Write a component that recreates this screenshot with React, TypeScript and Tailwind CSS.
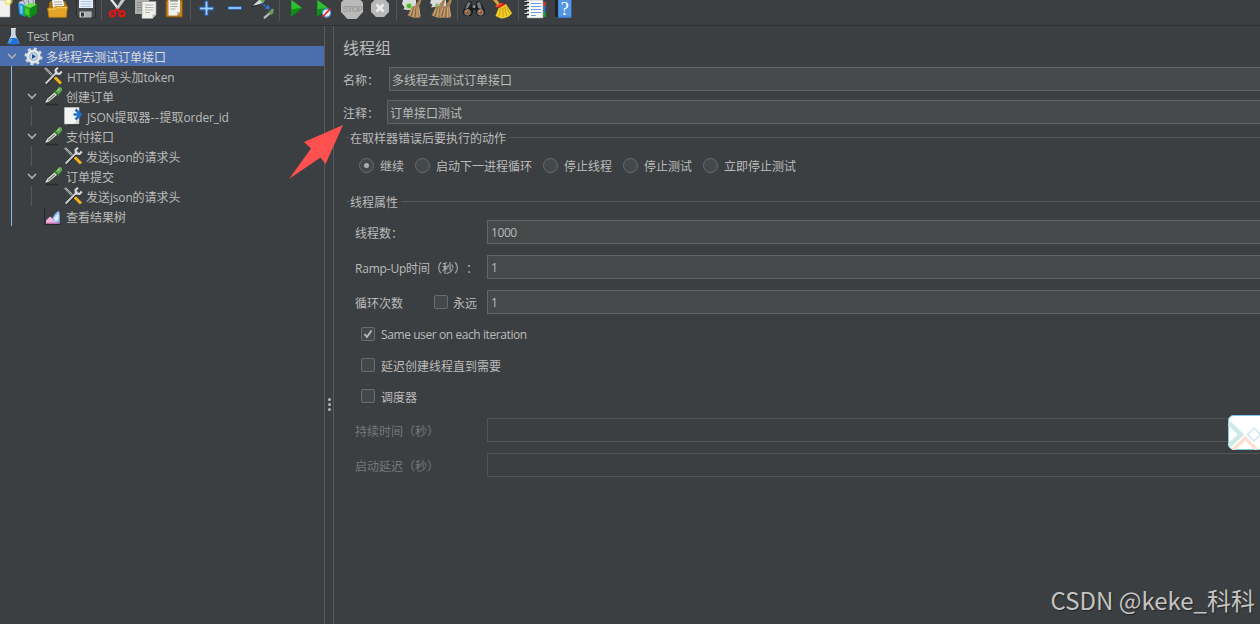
import React from 'react'

interface TreeItem {
  label: string
  icon: React.ReactNode
  depth: number
  open?: boolean
  selected?: boolean
  guide?: boolean
}

const FONT = "font-['Open_Sans','Noto_Sans_CJK_SC',sans-serif]"

const isLatin = (text: string) => /^[\x20-\x7e]+$/.test(text)

// Latin runs are set a little tighter than the CJK ones
const Txt = ({ children }: { children: string }) => (
  <>
    {children.split(/(--|[\x20-\x7e]+)/).map((part, i) => {
      if (i % 2 === 0) return part
      const spacing = part === '--' ? 'tracking-[0.7px]' : isLatin(children) ? 'tracking-[-0.41px]' : 'tracking-[-0.2px]'
      return (
        <span key={i} className={`[font-variant-ligatures:none] ${spacing}`}>{part}</span>
      )
    })}
  </>
)

/* ---------- toolbar icons ---------- */

const Ico = ({ children }: { children: React.ReactNode }) => (
  <div className="flex flex-1 justify-center">
    <svg width="28" height="25" viewBox="0 0 28 25" className="shrink-0">{children}</svg>
  </div>
)

const NewIcon = () => (
  <Ico>
    <path d="M8 0h16v17H8z" fill="#f1f1ef" stroke="#aaa" strokeWidth=".6" />
    <circle cx="22.5" cy="1" r="4.2" fill="#f4df45" opacity=".65" />
    <circle cx="22.5" cy="1" r="2.2" fill="#fffbd0" />
  </Ico>
)

const TemplatesIcon = () => (
  <Ico>
    <path d="M4 2l5-2h11v6H4z" fill="#c4ccd2" />
    <path d="M8 0l2 4M13 0l1 4M18 0l1 4" stroke="#7d8b95" strokeWidth="1" />
    <path d="M3 3l7 2v12l-6-3z" fill="#1793dc" />
    <path d="M4.500 5l3 1v8l-2-1z" fill="#6fc6f5" />
    <path d="M8.500 6l7 2v10l-7-3z" fill="#1fae25" />
    <path d="M15.500 8l6.500-4v9l-6.500 5z" fill="#0e8a12" />
    <path d="M8.500 6l7-3 6.500 1-6.500 4z" fill="#6de04e" />
    <path d="M10 8l4 1.300v6l-4-1.600z" fill="#45cc34" />
  </Ico>
)

const OpenIcon = () => (
  <Ico>
    <path d="M5 3l2-2h14l2 4v12H5z" fill="#a8700f" />
    <path d="M8 0h11l2 8H9z" fill="#f2f2ee" />
    <path d="M10 2h8M10.500 4.500h8" stroke="#aaa" strokeWidth="1" />
    <path d="M3.500 8h6l2-1.500h12L22 17.300H5z" fill="#e3a527" stroke="#b97d14" strokeWidth=".8" />
    <path d="M5 9.200h6l2-1.500h10" stroke="#f8d067" fill="none" />
  </Ico>
)

const SaveIcon = () => (
  <Ico>
    <path d="M3.500 0h19v17.500h-17l-2-2z" fill="#45484d" stroke="#25272a" strokeWidth=".8" />
    <path d="M6 0h14v8H6z" fill="#e9f0f8" />
    <path d="M7.500 1.500h11M7.500 4h11M7.500 6.500h11" stroke="#a9c3e4" strokeWidth="1" />
    <path d="M6.500 11.500h12v6h-12z" fill="#c9cacc" />
    <path d="M8 12.500h3v4H8z" fill="#36383b" />
    <path d="M12 12h6v5h-6z" fill="#8f9194" opacity=".5" />
  </Ico>
)

const CutIcon = () => (
  <Ico>
    <path d="M7 0l7 9 1.500-2L10 0z" fill="#e5e5e5" />
    <path d="M22 0l-8 11-1.500-2L18 0z" fill="#c7c7c7" />
    <circle cx="9.500" cy="13.800" r="2.600" fill="none" stroke="#dc1515" strokeWidth="2.300" />
    <circle cx="18.900" cy="13.800" r="2.600" fill="none" stroke="#dc1515" strokeWidth="2.300" />
    <path d="M11 11.500l3-2 3 2" stroke="#dc1515" strokeWidth="2" fill="none" />
  </Ico>
)

const CopyIcon = () => (
  <Ico>
    <path d="M3 0h14v14H3z" fill="#adadaa" />
    <path d="M5 2.500h8M5 5h5M5 7.500h5M5 10h5" stroke="#8b8b89" strokeWidth="1" />
    <path d="M10 1.500H24v13L20.500 18.500H10z" fill="#f0f0ed" stroke="#999" strokeWidth=".7" />
    <path d="M13 5h8.500M13 7.500h8.500M13 10h8.500M13 12.500h5" stroke="#b3b3b1" strokeWidth="1" />
    <path d="M24 14.500h-3.500V18z" fill="#bcbcb8" />
  </Ico>
)

const PasteIcon = () => (
  <Ico>
    <path d="M5 0h16.500v17H5z" fill="#c08226" stroke="#80500d" strokeWidth="1" />
    <path d="M7.500 0h11.500v12l-3 3.500H7.500z" fill="#f2f2ec" />
    <path d="M9.500 4h7M9.500 6.500h7M9.500 9h5" stroke="#a9a9a5" strokeWidth="1" />
    <path d="M9 0h8v1.500H9z" fill="#8d8d89" />
    <path d="M19 12h-3v3.500z" fill="#b5b5ae" />
  </Ico>
)

const PlusIcon = () => (
  <Ico>
    <path d="M12 1h3v6h5.500v3H15v5.500h-3V10H6.500V7H12z" fill="#7fb6f3" stroke="#2b5fae" strokeWidth="1" />
    <path d="M13.500 2v12.500M7.500 8.500h12" stroke="#a9d0fa" strokeWidth="1" />
  </Ico>
)

const MinusIcon = () => (
  <Ico>
    <path d="M7 6.500h13.500v3H7z" fill="#8cc0f6" stroke="#2b5fae" strokeWidth="1" />
  </Ico>
)

const ToggleIcon = () => (
  <Ico>
    <path d="M4 5.500l6-5.500h5l-2 3-6.500 2.500z" fill="#d5d8d5" />
    <path d="M11 0h5l-2 3.500z" fill="#6aaa55" />
    <path d="M3 7l6-2" stroke="#202324" />
    <path d="M12 3l6 4" stroke="#3273dc" strokeWidth="1.500" strokeDasharray="2 1" />
    <path d="M20.500 9.500l-.5-5-4.500 4z" fill="#3273dc" />
    <path d="M15 19l-.5-2 6-5 1.500 1.500-5 4.500z" fill="#b7bcb6" />
    <path d="M19.500 12.500l3.500-4 2 1-1 4-2 1.500z" fill="#6f9a62" />
  </Ico>
)

const PlayIcon = () => (
  <Ico>
    <path d="M9 0l11.500 8L9 17z" fill="#0c8f14" />
    <path d="M9.500 0l10 7.500-10 2z" fill="#31bd35" />
  </Ico>
)

const PlayNoTimersIcon = () => (
  <Ico>
    <path d="M7 0l11.500 8L7 17z" fill="#0c8f14" />
    <path d="M7.500 0l10 7.500-10 2z" fill="#31bd35" />
    <circle cx="16.500" cy="13" r="4.200" fill="#e3edf5" stroke="#4f8fce" strokeWidth="1.200" />
    <path d="M12.500 17L20.500 8.500" stroke="#df2020" strokeWidth="1.600" />
  </Ico>
)

const StopIcon = () => (
  <Ico>
    <path d="M8.500-3h11L25 2.500v9.500l-6.500 7h-9L3 12V2.500z" fill="#b9b9b9" />
    <text x="4.500" y="11.500" fontSize="9" fontWeight="700" letterSpacing="-1.200" fill="#9c9c9c" fontFamily="Liberation Sans">STOP</text>
  </Ico>
)

const ShutdownIcon = () => (
  <Ico>
    <path d="M9.500-1h9L23 3.500v8.500l-5 5h-8l-5-5V3.500z" fill="#b9b9b9" />
    <path d="M10.500 4.500l7 7M17.500 4.500l-7 7" stroke="#ededed" strokeWidth="2.600" />
  </Ico>
)

const Bristle = ({ x = 0 }: { x?: number }) => (
  <g transform={`translate(${x} 0)`}>
    <path d="M15 5l4-5h2.500L19 7z" fill="#a78253" />
    <path d="M12 6.500l7-1.500 1.500 12.500-6 .5-7-2.500z" fill="#a9845a" />
    <path d="M12.500 8l-3 7.500M14.500 8l-1.500 9M17 8l0 9.500M18.500 7l1.500 9" stroke="#d0ad7e" strokeWidth=".9" />
    <path d="M13.500 8l-2.300 8M16 8l-1 9.500" stroke="#74522c" strokeWidth=".6" />
  </g>
)

const ClearIcon = () => (
  <Ico>
    <path d="M4 0h13v6l-4 4H8L6 9.500H4.500L5.500 7 3 4z" fill="#d9dbdc" />
    <circle cx="10" cy="6" r="3.200" fill="#a9dd90" />
    <circle cx="10" cy="6" r="2.200" fill="#4bb527" />
    <Bristle x={1} />
  </Ico>
)

const ClearAllIcon = () => (
  <Ico>
    <path d="M4 0h15v7H7L4 7.500l1.500-2.500L3 3z" fill="#d9dbdc" />
    <circle cx="10" cy="5.500" r="2.200" fill="#8cc873" />
    <Bristle x={-3} />
    <Bristle x={3.5} />
  </Ico>
)

const SearchIcon = () => (
  <Ico>
    <path d="M8 1l4 1v3h4V2l4-1 5 9v4l-3 2h-4l-2-3v-3h-3v3l-2 3H6l-3-2v-4z" fill="#1d1e1f" />
    <path d="M8 2l3 1-3 5-3 1zM20 2l-3 1 1 5 4 1z" fill="#777b7e" />
    <circle cx="7.500" cy="12.300" r="2.800" fill="#9a5b30" stroke="#8a8c8e" />
    <circle cx="20.500" cy="12.300" r="2.800" fill="#9a5b30" stroke="#8a8c8e" />
    <path d="M6 12l1.500-1.500M19 12l1.500-1.500" stroke="#f0b780" />
    <circle cx="14" cy="6.500" r="1.500" fill="#909396" />
  </Ico>
)

const BroomIcon = () => (
  <Ico>
    <path d="M5 0h4l3 4-2 2z" fill="#d9a636" />
    <path d="M11 7l7-3 6 9c-1.500 3-5.500 5-11 5.500L7.500 16z" fill="#f0cd28" />
    <path d="M13 8l-2 8.500M15 8l0 9M16.500 6.500l2 9.500M18 6l4 7.500" stroke="#b98d0c" strokeWidth=".7" />
    <path d="M6.500 6.500l7-4 4 2-6 3.500z" fill="#df2514" />
    <path d="M8 6.500l5.500-3" stroke="#ff7665" />
  </Ico>
)

const FunctionIcon = () => (
  <Ico>
    <path d="M20 2h5v5h-5z" fill="#c43a30" />
    <path d="M20 6h4.500v6H20z" fill="#2a73d2" />
    <path d="M20 12h5v5h-5z" fill="#1e9a2a" />
    <path d="M6 0h16v18H6z" fill="#fafafa" stroke="#989898" strokeWidth=".6" />
    <path d="M10 3.500h10M10 6.500h10M10 9.500h10M10 12.500h10M10 15.500h5" stroke="#6f9cdd" strokeWidth="1.200" />
    <path d="M4 2.500h4M4 6.500h4M4 10.500h4M4 14.500h4" stroke="#191919" strokeWidth="1.500" />
    <path d="M3.500 1.500h3M3.500 5.500h3M3.500 9.500h3M3.500 13.500h3" stroke="#ddd" strokeWidth="1" />
  </Ico>
)

const HelpIcon = () => (
  <Ico>
    <path d="M6 0h16.500v18H8l-2-1.500z" fill="#3a7fd4" />
    <path d="M6 0h3v18l-3-1.500z" fill="#1d222b" />
    <path d="M9.500 0h12.500v16.500H9.500z" fill="#5496e2" />
    <text x="15.700" y="14.500" textAnchor="middle" fontSize="18" fill="#fff" fontFamily="Liberation Serif">?</text>
  </Ico>
)

const Sep = () => <div className="h-[21px] w-px bg-[#555555]" />

const Toolbar = () => (
  <div className="flex h-[26px] shrink-0 overflow-hidden border-b border-[#323232]">
    <div className="-ml-[15px] flex w-[116px] shrink-0">
      <NewIcon /><TemplatesIcon /><OpenIcon /><SaveIcon />
    </div>
    <Sep />
    <div className="flex w-[88px]"><CutIcon /><CopyIcon /><PasteIcon /></div>
    <Sep />
    <div className="flex w-[88px] px-0.5"><PlusIcon /><MinusIcon /><ToggleIcon /></div>
    <Sep />
    <div className="flex w-[116px] px-0.5"><PlayIcon /><PlayNoTimersIcon /><StopIcon /><ShutdownIcon /></div>
    <Sep />
    <div className="flex w-[60px] px-0.5"><ClearIcon /><ClearAllIcon /></div>
    <Sep />
    <div className="flex w-[60px] px-0.5"><SearchIcon /><BroomIcon /></div>
    <Sep />
    <div className="flex w-[60px] px-0.5"><FunctionIcon /><HelpIcon /></div>
  </div>
)

/* ---------- tree ---------- */

const TreeIcon = ({ children }: { children: React.ReactNode }) => (
  <svg width="20" height="20" viewBox="0 0 20 20" className="shrink-0">{children}</svg>
)

const Flask = () => (
  <TreeIcon>
    <path d="M8 2.500h5M8.700 3v6L5 17.500h11L12 9V3z" fill="#c3d2e0" stroke="#dce3ea" strokeWidth="1" />
    <path d="M7.500 12h6l2.800 5.500c0 1.500-12 1.500-12 0z" fill="#1c72d8" />
    <path d="M8.500 13l-2 4" stroke="#8fc3f8" />
  </TreeIcon>
)

const Gear = () => (
  <TreeIcon>
    <circle cx="10.500" cy="10.500" r="7.800" fill="none" stroke="#d5d8da" strokeWidth="2.400" strokeDasharray="3.060 3.060" />
    <circle cx="10.500" cy="10.500" r="5.800" fill="#c3d8ef" stroke="#e4e6e8" strokeWidth="2.600" />
    <circle cx="10.500" cy="10.500" r="4" fill="#c3daf2" stroke="#8ea3b8" strokeWidth=".8" />
    <path d="M9 8l4 2.500-4 2.500z" fill="#24508c" />
  </TreeIcon>
)

const Tools = () => (
  <TreeIcon>
    <path d="M2 2L11 11" stroke="#c6c8c8" strokeWidth="2.200" />
    <path d="M2 2.500L11 11" stroke="#333" strokeWidth=".7" />
    <path d="M11 10.500l7 7" stroke="#f2b414" strokeWidth="3" />
    <path d="M3 17.500L14 6.500" stroke="#16181a" strokeWidth="3.600" />
    <path d="M2.700 17.500L14.500 5.500" stroke="#c9cdcd" strokeWidth="2.200" />
    <path d="M15 1.800l-2.500 2.200.5 3.500 3.500.5 2.300-2.500" fill="none" stroke="#d9dddd" strokeWidth="2" />
  </TreeIcon>
)

const Dropper = () => (
  <TreeIcon>
    <path d="M3 18.500h12" stroke="#1e2021" strokeWidth="1.600" opacity=".7" />
    <path d="M1.500 17.500l2-4.500L12 5.500l3 3-9 7.500z" fill="#dfe4df" stroke="#222" strokeWidth=".7" />
    <path d="M5 14.500l7-6" stroke="#6f8570" strokeWidth="1.200" />
    <path d="M11 4.500l5 5" stroke="#2c6a2b" strokeWidth="2" />
    <path d="M12.500 5.500l3-4c1.500-1.500 4.500.5 3.500 3L15.500 8.500z" fill="#5faa50" />
    <path d="M14.500 5l2-2.500" stroke="#b3e2a5" />
  </TreeIcon>
)

const Extractor = () => (
  <TreeIcon>
    <path d="M5 18.500h12" stroke="#1e2021" strokeWidth="1.400" />
    <path d="M1.500 1.500h14.500V18H1.500z" fill="#f4f4f2" stroke="#c4c4c2" strokeWidth=".6" />
    <path d="M11 18h5v-5z" fill="#d0d0cd" />
    <path d="M12.500 3.500l5 5-5 5M10.500 8.500h6" fill="none" stroke="#2070d0" strokeWidth="2.600" />
  </TreeIcon>
)

const Results = () => (
  <TreeIcon>
    <path d="M1.500 2v16.500h16" stroke="#25282a" strokeWidth="1" fill="none" />
    <path d="M3 17.500v-3l4-4 4 3 3 4z" fill="#f2b4dc" />
    <path d="M9.500 12c2-4 4-6.500 6.500-7 1 3 1 8 .5 12.500H12z" fill="#8dbcee" />
    <path d="M11 12l4.500-5v6l-3 3z" fill="#dceeff" />
    <path d="M3 17h13" stroke="#e06ab8" />
  </TreeIcon>
)

const items: TreeItem[] = [
  { label: 'Test Plan', icon: <Flask />, depth: 0 },
  { label: '多线程去测试订单接口', icon: <Gear />, depth: 1, open: true, selected: true },
  { label: 'HTTP信息头加token', icon: <Tools />, depth: 2 },
  { label: '创建订单', icon: <Dropper />, depth: 2, open: true },
  { label: 'JSON提取器--提取order_id', icon: <Extractor />, depth: 3, guide: true },
  { label: '支付接口', icon: <Dropper />, depth: 2, open: true },
  { label: '发送json的请求头', icon: <Tools />, depth: 3, guide: true },
  { label: '订单提交', icon: <Dropper />, depth: 2, open: true },
  { label: '发送json的请求头', icon: <Tools />, depth: 3, guide: true },
  { label: '查看结果树', icon: <Results />, depth: 2 },
]

const indents = ['w-[3px]', 'w-[3px]', 'w-[23px]', 'w-[43px]']

const Row = ({ item }: { item: TreeItem }) => (
  <div className={`flex h-5 items-center whitespace-nowrap ${item.selected ? 'bg-[#4b6eaf]' : ''}`}>
    {/* guide lines */}
    <div className={`flex h-5 shrink-0 ${indents[item.depth]}`}>
      {item.depth > 1 && <div className="ml-[11px] h-5 w-px bg-[#7fbdea]" />}
      {item.guide && <div className="ml-[19px] h-5 w-px bg-[#54585a]" />}
    </div>
    {item.depth > 0 && (
      <div className="flex w-5 shrink-0 justify-center pr-0.5">
        {item.open && (
          <svg width="10" height="8" viewBox="0 0 10 8">
            <path d="M1 2l4 4 4-4" fill="none" stroke="#adadad" strokeWidth="1.700" />
          </svg>
        )}
      </div>
    )}
    {item.icon}
    <span className={`${isLatin(item.label) ? 'pt-0.5' : 'pt-1'} ${/^[A-Z]/.test(item.label) ? 'ml-1' : 'ml-[3px]'} ${item.selected ? 'text-[#dddddd]' : ''}`}>
      <Txt>{item.label}</Txt>
    </span>
  </div>
)

/* ---------- form ---------- */

const Field = ({ value = '', disabled }: { value?: string; disabled?: boolean }) => (
  <div className={`flex h-6 flex-1 items-center border border-r-0 ${isLatin(value) ? 'pl-[3px]' : 'pl-0.5'} ${disabled ? 'border-[#515355]' : 'border-[#646464] bg-[#45494a]'}`}>
    <span className={isLatin(value) ? 'pt-px' : 'pt-[3px]'}><Txt>{value}</Txt></span>
  </div>
)

const Check = ({ checked }: { checked?: boolean }) => (
  <div className="h-3.5 w-3.5 shrink-0 rounded-[2px] border border-[#6b6b6b] bg-[#43494a]">
    {checked && (
      <svg width="12" height="12" viewBox="0 0 12 12">
        <path d="M2.500 6l2.500 3 4.500-6.500" fill="none" stroke="#bbbbbb" strokeWidth="1.900" />
      </svg>
    )}
  </div>
)

const Radio = ({ label, checked }: { label: string; checked?: boolean }) => (
  <div className="flex items-center gap-1.5">
    <div className="flex h-[15px] w-[15px] items-center justify-center rounded-full border border-[#6b6b6b] bg-[#43494a]">
      {checked && <div className="h-[5px] w-[5px] rounded-full bg-[#adadad]" />}
    </div>
    <span className="pt-0.5">{label}</span>
  </div>
)

const GroupTitle = ({ children }: { children: string }) => (
  <div className="flex h-4 items-center pl-3">
    <div className="mr-px h-px w-[3px] bg-[#555759]" />
    <span className="pt-1">{children}</span>
    <div className="ml-[3px] h-px flex-1 bg-[#555759]" />
  </div>
)

const Prop = ({ label, value, disabled, children }: { label: string; value?: string; disabled?: boolean; children?: React.ReactNode }) => (
  <div className={`flex h-6 items-center pl-[21px] ${disabled ? 'text-[#777777]' : ''}`}>
    <div className="flex w-[132px] items-center whitespace-nowrap">
      <span className="pt-1"><Txt>{label}</Txt></span>
      {children}
    </div>
    <Field value={value} disabled={disabled} />
  </div>
)

const ThreadGroup = () => (
  <div className="flex min-w-0 flex-1 flex-col">
    <h1 className="mt-2.5 h-6 pl-[9px] text-base leading-6">线程组</h1>
    <div className="mt-[7px] flex h-6 items-center pl-[9px]">
      <span className="w-[46px] pt-1">名称：</span>
      <Field value="多线程去测试订单接口" />
    </div>
    <div className="mt-[9px] flex h-6 items-center pl-[9px]">
      <span className="w-11 pt-1">注释：</span>
      <Field value="订单接口测试" />
    </div>
    <div className="mt-[5px]">
      <GroupTitle>在取样器错误后要执行的动作</GroupTitle>
    </div>
    <div className="mt-[13px] flex h-[15px] gap-[11px] pl-[25px]">
      <Radio label="继续" checked />
      <Radio label="启动下一进程循环" />
      <Radio label="停止线程" />
      <Radio label="停止测试" />
      <Radio label="立即停止测试" />
    </div>
    <div className="mt-5">
      <GroupTitle>线程属性</GroupTitle>
    </div>
    <div className="mt-[11px] flex flex-col gap-[11px]">
      <Prop label="线程数：" value="1000" />
      <Prop label="Ramp-Up时间（秒）：" value="1" />
      <Prop label="循环次数" value="1">
        <div className="ml-[31px] flex items-center gap-[5px]">
          <Check />
          <span className="pt-1">永远</span>
        </div>
      </Prop>
    </div>
    <div className="mt-[13px] flex flex-col gap-[17px] pl-[27px]">
      {['Same user on each iteration', '延迟创建线程直到需要', '调度器'].map((label, i) => (
        <div key={label} className="flex h-3.5 items-center gap-[6px]">
          <Check checked={i === 0} />
          <span className={isLatin(label) ? 'pt-0.5' : 'pt-[3px]'}><Txt>{label}</Txt></span>
        </div>
      ))}
    </div>
    <div className="mt-[15px] flex flex-col gap-[11px]">
      <Prop label="持续时间（秒）" disabled />
      <Prop label="启动延迟（秒）" disabled />
    </div>
  </div>
)

const FloatingBadge = () => (
  <svg width="32" height="35" viewBox="0 0 32 35" className="absolute top-[415px] right-0">
    <rect x=".5" y=".5" width="44" height="34" rx="5" fill="#fff" stroke="#7cc8ee" />
    <path d="M1 8l12 11.500L1 31" fill="none" stroke="#cdeae7" strokeWidth="4.500" />
    <path d="M5 35l12-12 12 12" fill="none" stroke="#fde0d0" strokeWidth="3.500" />
    <path d="M26 13l6.500 6.500L26 26l-6.500-6.500z" fill="none" stroke="#c9e8fa" strokeWidth="1.500" />
  </svg>
)

export default function App() {
  return (
    <div className={`relative flex h-[624px] w-[1260px] flex-col overflow-hidden bg-[#3c3f41] text-xs leading-4 text-[#bbbbbb] [text-spacing-trim:space-all] ${FONT}`}>
      <Toolbar />
      <div className="flex min-h-0 flex-1">
        <div className="w-[324px] shrink-0">
          {items.map((item, i) => (
            <Row key={i} item={item} />
          ))}
        </div>
        {/* split pane handle */}
        <div className="flex w-2.5 shrink-0 flex-col items-center justify-center gap-0.5 border-x border-[#585a5c] pt-[158px]">
          <div className="h-[3px] w-[3px] rounded-full bg-[#b4b6b8]" />
          <div className="h-[3px] w-[3px] rounded-full bg-[#b4b6b8]" />
          <div className="h-[3px] w-[3px] rounded-full bg-[#b4b6b8]" />
        </div>
        <ThreadGroup />
      </div>

      <svg width="56" height="56" viewBox="0 0 56 56" className="absolute top-[125px] left-[288px]">
        <path d="M55 0L16 17l7 6.500L1 54l31.500-21.500 5 6.500z" fill="#ff5050" />
      </svg>
      <FloatingBadge />
      <div className="absolute right-[5px] bottom-1.5 font-['Noto_Sans_CJK_SC',sans-serif] text-2xl leading-9 font-normal text-[#c4c4c4] [text-shadow:1px_1px_1px_#222]">
        CSDN @keke_科科
      </div>
    </div>
  )
}
